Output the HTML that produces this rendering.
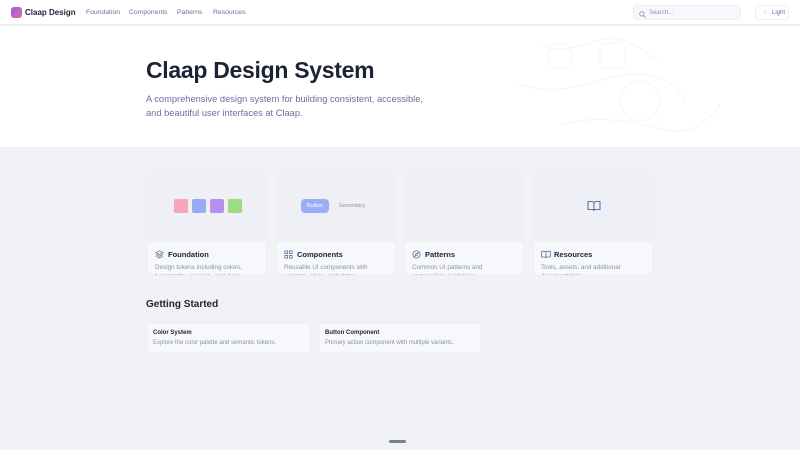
<!DOCTYPE html>
<html><head><meta charset="utf-8"><style>
*{margin:0;padding:0;box-sizing:border-box}
body{width:800px;height:450px;overflow:hidden;background:#f1f2f6;font-family:"Liberation Sans",sans-serif;position:relative}
.nav{position:absolute;top:0;left:0;width:800px;height:25px;background:#fff;border-bottom:1px solid #eceef3}
.logo{position:absolute;left:11px;top:7px;width:11px;height:11px;border-radius:3px;background:linear-gradient(135deg,#9b5ee0,#e06aa8)}
.brand{position:absolute;left:25px;top:7.5px;font-size:8px;font-weight:bold;color:#1e2235}
.nl{position:absolute;top:8.5px;font-size:6.8px;color:#6870a0}
.search{position:absolute;left:633px;top:5px;width:108px;height:15px;border:1px solid #eceef3;border-radius:4px;background:#f7f8fb;font-size:6px;color:#8a90ad;padding:4px 0 0 15px}
.light{position:absolute;left:755px;top:5px;width:34px;height:15px;border:1px solid #eceef3;border-radius:4px;font-size:6px;color:#6870a0;padding:4px 0 0 16px}
.hero{position:absolute;top:26px;left:0;width:800px;height:121px;background:#fff}
h1{position:absolute;left:146px;top:31px;font-size:23px;color:#1e2235;font-weight:bold;letter-spacing:-.3px}
.sub{position:absolute;left:146px;top:67px;font-size:9.3px;line-height:13.5px;color:#6870a0;width:290px}
.card{position:absolute;top:171px;width:120px;height:105px;border-radius:5px;background:#f7f8fb;border:1px solid #eceef3;overflow:hidden}
.img{height:70px;background:#eff0f5;position:relative}
.ct{position:absolute;left:7px;top:78px;font-size:7.5px;font-weight:bold;color:#1e2235}
.ct svg{position:absolute;left:0;top:0}
.ct b{margin-left:13px}
.cd{position:absolute;left:7px;top:91px;font-size:6.3px;line-height:9px;color:#8a90ad;width:100px}
.sw{position:absolute;top:27px;width:14px;height:14px;border-radius:2px}
h2{position:absolute;left:146px;top:299px;font-size:10px;color:#1e2235;font-weight:bold}
.gs{position:absolute;top:322px;height:31px;border-radius:5px;background:#f7f8fb;border:1px solid #eceef3}
.gs b{position:absolute;left:6px;top:7px;font-size:6px;color:#1e2235}
.gs i{position:absolute;left:6px;top:17px;font-size:6px;color:#8a90ad;font-style:normal}
</style></head><body>
<div class="nav">
<div class="logo"></div><div class="brand">Claap Design</div>
<div class="nl" style="left:86px">Foundation</div>
<div class="nl" style="left:129px">Components</div>
<div class="nl" style="left:177px">Patterns</div>
<div class="nl" style="left:213px">Resources</div>
<div class="search"><svg style="position:absolute;left:5px;top:5px" width="7" height="7" viewBox="0 0 8 8"><circle cx="3.3" cy="3.3" r="2.5" fill="none" stroke="#8a90ad" stroke-width=".9"/><path d="M5.2 5.2L7.5 7.5" stroke="#8a90ad" stroke-width=".9"/></svg>Search...</div>
<div class="light"><span style="position:absolute;left:6px;top:3px;color:#f0b84a;font-size:7px">☼</span>Light</div>
</div>
<div class="hero">
<svg width="800" height="121" style="position:absolute;left:0;top:0" fill="none" stroke="#f3f4f7" stroke-width="1">
<path d="M538 17 C560 30 575 20 600 14 C620 8 640 20 660 37"/>
<circle cx="560" cy="30" r="12"/><rect x="600" y="17" width="25" height="25" rx="4"/>
<path d="M517 57 C560 75 600 50 630 48 C660 47 680 60 685 77"/>
<circle cx="640" cy="75" r="20"/>
<path d="M560 100 C600 85 650 100 670 105 C690 108 710 95 720 78"/>
</svg>
<h1>Claap Design System</h1>
<div class="sub">A comprehensive design system for building consistent, accessible, and beautiful user interfaces at Claap.</div>
</div>
<div class="card" style="left:147px"><div class="img">
<div class="sw" style="left:26px;background:#f3a7b8"></div><div class="sw" style="left:44px;background:#97acf7"></div><div class="sw" style="left:62px;background:#b490f1"></div><div class="sw" style="left:80px;background:#9edc84"></div></div>
<div class="ct"><svg width="9" height="9" viewBox="0 0 10 10" fill="none" stroke="#6870a0" stroke-width=".9"><path d="M5 1L9 3 5 5 1 3z M1 5l4 2 4-2 M1 7l4 2 4-2"/></svg><b>Foundation</b></div><div class="cd">Design tokens including colors, typography, spacing, and more.</div></div>
<div class="card" style="left:276px"><div class="img">
<div style="position:absolute;left:24px;top:27px;width:28px;height:14px;border-radius:4px;background:#9aaef7;color:#fff;font-size:5.5px;text-align:center;line-height:14px">Button</div>
<div style="position:absolute;left:56px;top:27px;width:38px;height:14px;font-size:5.5px;color:#8a90ad;text-align:center;line-height:14px">Secondary</div></div>
<div class="ct"><svg width="9" height="9" viewBox="0 0 10 10" fill="none" stroke="#6870a0" stroke-width=".9"><rect x="1" y="1" width="3" height="3"/><rect x="6" y="1" width="3" height="3"/><rect x="1" y="6" width="3" height="3"/><rect x="6" y="6" width="3" height="3"/></svg><b>Components</b></div><div class="cd">Reusable UI components with variants, sizes, and states.</div></div>
<div class="card" style="left:404px"><div class="img"></div>
<div class="ct"><svg width="9" height="9" viewBox="0 0 10 10" fill="none" stroke="#6870a0" stroke-width=".9"><circle cx="5" cy="5" r="4"/><path d="M6.8 3.2L5.8 5.8 3.2 6.8 4.2 4.2z"/></svg><b>Patterns</b></div><div class="cd">Common UI patterns and composition guidelines.</div></div>
<div class="card" style="left:533px"><div class="img">
<svg style="position:absolute;left:53px;top:28px" width="14" height="12" viewBox="0 0 14 12" fill="none" stroke="#6870a0" stroke-width="1.1"><path d="M1 1.5h4a2 2 0 0 1 2 2V11a1.5 1.5 0 0 0-1.5-1.5H1z M13 1.5H9a2 2 0 0 0-2 2V11a1.5 1.5 0 0 1 1.5-1.5H13z"/></svg></div>
<div class="ct"><svg width="10" height="9" viewBox="0 0 14 12" fill="none" stroke="#6870a0" stroke-width="1.2"><path d="M1 1.5h4a2 2 0 0 1 2 2V11a1.5 1.5 0 0 0-1.5-1.5H1z M13 1.5H9a2 2 0 0 0-2 2V11a1.5 1.5 0 0 1 1.5-1.5H13z"/></svg><b>Resources</b></div><div class="cd">Tools, assets, and additional documentation.</div></div>
<h2>Getting Started</h2>
<div class="gs" style="left:146px;width:165px"><b>Color System</b><i>Explore the color palette and semantic tokens.</i></div>
<div class="gs" style="left:318px;width:164px"><b>Button Component</b><i>Primary action component with multiple variants.</i></div>
<div style="position:absolute;left:389px;top:440px;width:17px;height:3px;border-radius:2px;background:#7a7f90"></div>
</body></html>
